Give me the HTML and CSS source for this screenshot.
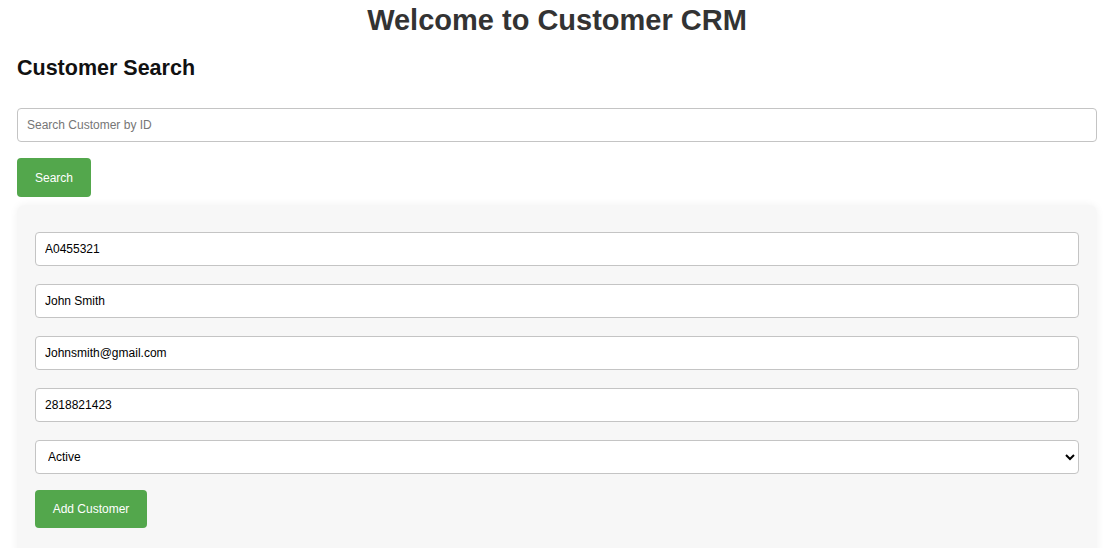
FILE: index.html
```html
<!DOCTYPE html>
<html>
<head>
<meta charset="utf-8">
<link rel="stylesheet" href="styles.css">
<title>Customer CRM</title>
</head>
<body>
<div class="page">
  <h1 class="title">Welcome to Customer CRM</h1>
  <h2 class="section-title">Customer Search</h2>
  <input class="field search-field" type="text" placeholder="Search Customer by ID">
  <button class="btn search-btn">Search</button>
  <div class="panel">
    <input class="field" type="text" value="A0455321">
    <input class="field" type="text" value="John Smith">
    <input class="field" type="text" value="Johnsmith@gmail.com">
    <input class="field" type="text" value="2818821423">
    <select class="field select-field">
      <option>Active</option>
      <option>Inactive</option>
    </select>
    <button class="btn add-btn">Add Customer</button>
  </div>
</div>
</body>
</html>
```

FILE: styles.css
```css
html, body {
  margin: 0;
  padding: 0;
  background: #ffffff;
  font-family: "Liberation Sans", Arial, sans-serif;
}

.page {
  padding: 0 19px 0 17px;
  display: flex;
  flex-direction: column;
  align-items: flex-start;
}

.title {
  align-self: stretch;
  margin: 4px 0 0;
  text-align: center;
  font-size: 29px;
  font-weight: bold;
  color: #333333;
}

.section-title {
  margin: 19px 0 0;
  font-size: 21.5px;
  font-weight: bold;
  color: #111111;
}

.field {
  box-sizing: border-box;
  width: 100%;
  height: 34px;
  margin: 0;
  padding: 0 9px;
  border: 1px solid #c4c4c4;
  border-radius: 4px;
  background: #ffffff;
  font-family: "Liberation Sans", Arial, sans-serif;
  font-size: 12px;
  color: #000000;
  outline: none;
}

.field::placeholder {
  color: #767676;
}

.search-field {
  margin-top: 27px;
}

.btn {
  border: none;
  border-radius: 4px;
  background: #53a74c;
  color: #ffffff;
  font-family: "Liberation Sans", Arial, sans-serif;
  font-size: 12px;
  cursor: pointer;
}

.search-btn {
  margin-top: 16px;
  width: 74px;
  height: 39px;
}

.panel {
  box-sizing: border-box;
  align-self: stretch;
  margin-top: 8px;
  padding: 27px 18px 30px;
  background: #f7f7f7;
  border-radius: 8px;
  box-shadow: 0 0 8px rgba(0, 0, 0, 0.06);
  display: flex;
  flex-direction: column;
  align-items: flex-start;
  gap: 18px;
}

.select-field {
  padding-left: 8px;
}

.add-btn {
  width: 112px;
  height: 38px;
  margin-top: -2px;
}
```
